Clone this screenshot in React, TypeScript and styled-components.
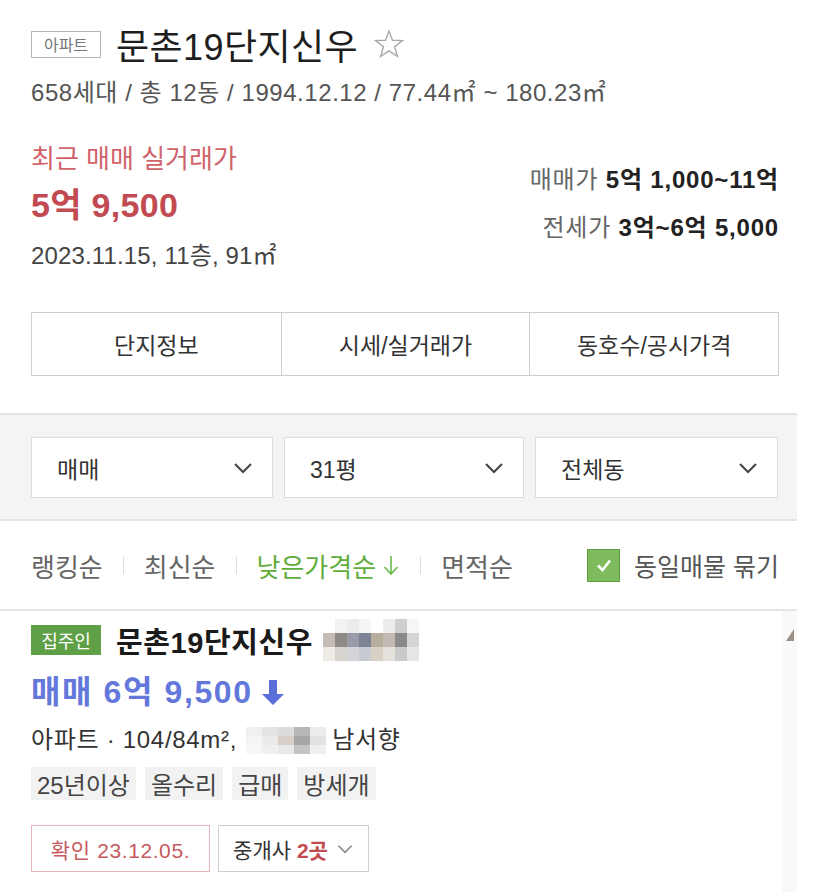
import styled, { createGlobalStyle } from 'styled-components'

const GlobalStyle = createGlobalStyle`
  html, body {
    margin: 0;
    padding: 0;
    background: #ffffff;
  }
  body {
    font-family: "Liberation Sans", "Noto Sans CJK KR", sans-serif;
    color: #333;
  }
`;

const Page = styled.div`
  width: 797px;
  background: #fff;
`;

const Summary = styled.section`
  padding: 22px 18px 37px 31px;
`;

const TitleRow = styled.div`
  display: flex;
  align-items: center;
  height: 44px;
`;

const TypeBadge = styled.span`
  display: inline-flex;
  align-items: center;
  justify-content: center;
  box-sizing: border-box;
  width: 70px;
  height: 27px;
  border: 1px solid #b5b5b5;
  font-size: 16px;
  color: #777;
  margin-right: 15px;
`;

const Title = styled.h1`
  margin: 0;
  font-size: 36px;
  font-weight: 400;
  color: #1e1e1e;
  letter-spacing: 0.4px;
`;

const Star = styled.svg`
  margin-left: 15px;
  width: 32px;
  height: 32px;
`;

const Meta = styled.div`
  margin-top: 12px;
  font-size: 24px;
  line-height: 30px;
  color: #555;
  letter-spacing: 0.55px;
`;

const PriceArea = styled.div`
  display: flex;
  justify-content: space-between;
  margin-top: 35px;
`;

const RecentLabel = styled.div`
  font-size: 26px;
  line-height: 32px;
  color: #d0636a;
`;

const RecentPrice = styled.div`
  margin-top: 10px;
  font-size: 34px;
  line-height: 40px;
  font-weight: 700;
  color: #c24b52;
  letter-spacing: 0.3px;
`;

const RecentInfo = styled.div`
  margin-top: 16px;
  font-size: 24px;
  line-height: 30px;
  color: #444;
  letter-spacing: 0.15px;
`;

const RangeList = styled.div`
  display: flex;
  flex-direction: column;
  align-items: flex-end;
  padding-top: 22px;
  gap: 18px;
`;

const RangeLine = styled.div`
  font-size: 24px;
  line-height: 30px;
  color: #666;
  letter-spacing: 0.8px;
  b {
    color: #222;
    font-weight: 700;
    letter-spacing: 0.8px;
  }
`;

const Tabs = styled.div`
  display: grid;
  grid-template-columns: 1fr 1fr 1fr;
  margin-top: 41px;
  border: 1px solid #cfcfcf;
  height: 62px;
`;

const Tab = styled.div`
  display: flex;
  align-items: center;
  justify-content: center;
  font-size: 23px;
  color: #333;
  & + & {
    border-left: 1px solid #cfcfcf;
  }
`;

const FilterBand = styled.div`
  background: #f4f4f4;
  border-top: 2px solid #e3e3e3;
  border-bottom: 2px solid #e3e3e3;
  padding: 22px 18px 21px 31px;
  display: grid;
  grid-template-columns: 242px 240px 243px;
  gap: 11px;
`;

const Select = styled.div`
  box-sizing: border-box;
  height: 61px;
  background: #fff;
  border: 1px solid #dcdcdc;
  display: flex;
  align-items: center;
  justify-content: space-between;
  padding: 0 18px 0 25px;
  font-size: 23px;
  color: #333;
`;

const SortBar = styled.div`
  display: flex;
  align-items: center;
  height: 88px;
  padding: 0 18px 0 31px;
  border-bottom: 2px solid #e6e6e6;
`;

const SortItem = styled.span<{ $active?: boolean }>`
  display: inline-flex;
  align-items: center;
  font-size: 26px;
  color: ${p => (p.$active ? '#5fae3c' : '#666')};
  svg {
    margin-left: 6px;
  }
`;

const SortDivider = styled.span`
  width: 1px;
  height: 18px;
  background: #dedede;
  margin: 0 20px;
`;

const Grouping = styled.label`
  margin-left: auto;
  display: flex;
  align-items: center;
  gap: 14px;
  font-size: 25px;
  color: #555;
`;

const CheckBox = styled.span`
  box-sizing: border-box;
  width: 33px;
  height: 33px;
  background: #7dbb5d;
  border: 1px solid #5e9d42;
  display: flex;
  align-items: center;
  justify-content: center;
`;

const ListArea = styled.div`
  display: flex;
`;

const Article = styled.article`
  flex: 1;
  padding: 12px 0 20px 31px;
`;

const ArticleHead = styled.div`
  display: flex;
  align-items: center;
  height: 34px;
`;

const OwnerBadge = styled.span`
  display: inline-flex;
  align-items: center;
  justify-content: center;
  width: 70px;
  height: 30px;
  background: #5fa046;
  color: #fff;
  font-size: 18px;
  margin-right: 15px;
`;

const ArticleTitle = styled.span`
  font-size: 29px;
  font-weight: 700;
  color: #1a1a1a;
  letter-spacing: 0.6px;
  margin-right: 10px;
`;

const ArticlePrice = styled.div`
  display: flex;
  align-items: center;
  margin-top: 15px;
  font-size: 32px;
  line-height: 40px;
  font-weight: 700;
  color: #6478dc;
  letter-spacing: 1.6px;
  svg {
    margin-left: 8px;
  }
`;

const ArticleInfo = styled.div`
  display: flex;
  align-items: center;
  margin-top: 13px;
  font-size: 24px;
  line-height: 30px;
  color: #333;
  letter-spacing: 0.7px;
  svg {
    margin: 0 6px 0 9px;
  }
`;

const TagList = styled.div`
  display: flex;
  gap: 9px;
  margin-top: 12px;
`;

const Tag = styled.span`
  background: #f2f2f2;
  height: 33px;
  display: inline-flex;
  align-items: center;
  padding: 0 6px;
  font-size: 24px;
  color: #444;
`;

const ActionRow = styled.div`
  display: flex;
  gap: 8px;
  margin-top: 25px;
`;

const Confirmed = styled.span`
  box-sizing: border-box;
  height: 47px;
  width: 179px;
  border: 1px solid #eab5b8;
  display: inline-flex;
  align-items: center;
  justify-content: center;
  font-size: 21px;
  color: #c65a60;
  letter-spacing: 0.6px;
`;

const Agents = styled.span`
  box-sizing: border-box;
  height: 47px;
  width: 151px;
  border: 1px solid #cfcfcf;
  display: inline-flex;
  align-items: center;
  justify-content: center;
  gap: 8px;
  font-size: 21px;
  color: #333;
  b {
    color: #c24b52;
    font-weight: 700;
  }
`;

const Scrollbar = styled.div`
  width: 15px;
  background: #f9f9f9;
  display: flex;
  justify-content: center;
  padding-top: 16px;
`;

const Chevron = ({ size = 22, color = '#444' }: { size?: number; color?: string }) => (
  <svg width={size} height={size} viewBox="0 0 22 22">
    <polyline points="3,7 11,15 19,7" fill="none" stroke={color} strokeWidth="2" />
  </svg>
);

const Mosaic = ({ cells, w, h }: { cells: string[][]; w: number; h: number }) => (
  <svg width={cells[0].length * w} height={cells.length * h}>
    {cells.map((row, r) =>
      row.map((c, i) => <rect key={`${r}-${i}`} x={i * w} y={r * h} width={w} height={h} fill={c} />)
    )}
  </svg>
);

const titleBlur = [
  ['#ffffff', '#f2f2f2', '#ececec', '#f4f4f4', '#ffffff', '#ececec', '#cfcfcf', '#f6f6f6'],
  ['#c5bdb5', '#8e8a86', '#9a9aa8', '#7d8294', '#b8ae9e', '#c1bab4', '#8a8a8a', '#d4d4d4'],
  ['#eeeae6', '#d8d4d0', '#d4d4d8', '#c9cbd3', '#d8d0c4', '#e4e0dc', '#cacaca', '#e6e6e6'],
];

const infoBlur = [
  ['#f0f0f0', '#e4e4e4', '#dcdcdc', '#b8b8b8', '#ececec'],
  ['#f4f4f4', '#ebebeb', '#d8d0c8', '#a6a6a6', '#e2e2e2'],
  ['#f7f7f7', '#f0f0f0', '#e8e8e8', '#c4c4c4', '#efefef'],
];

export default function App() {
  return (
    <Page>
      <GlobalStyle />
      <Summary>
        <TitleRow>
          <TypeBadge>아파트</TypeBadge>
          <Title>문촌19단지신우</Title>
          <Star viewBox="0 0 32 32">
            <polygon
              points="16,3 19.5,12.3 29.4,12.6 21.6,18.8 24.4,28.4 16,22.8 7.6,28.4 10.4,18.8 2.6,12.6 12.5,12.3"
              fill="none"
              stroke="#a9a9a9"
              strokeWidth="1.4"
            />
          </Star>
        </TitleRow>
        <Meta>658세대 / 총 12동 / 1994.12.12 / 77.44㎡ ~ 180.23㎡</Meta>
        <PriceArea>
          <div>
            <RecentLabel>최근 매매 실거래가</RecentLabel>
            <RecentPrice>5억 9,500</RecentPrice>
            <RecentInfo>2023.11.15, 11층, 91㎡</RecentInfo>
          </div>
          <RangeList>
            <RangeLine>
              매매가 <b>5억 1,000~11억</b>
            </RangeLine>
            <RangeLine>
              전세가 <b>3억~6억 5,000</b>
            </RangeLine>
          </RangeList>
        </PriceArea>
        <Tabs>
          <Tab>단지정보</Tab>
          <Tab>시세/실거래가</Tab>
          <Tab>동호수/공시가격</Tab>
        </Tabs>
      </Summary>

      <FilterBand>
        <Select>
          매매 <Chevron />
        </Select>
        <Select>
          31평 <Chevron />
        </Select>
        <Select>
          전체동 <Chevron />
        </Select>
      </FilterBand>

      <SortBar>
        <SortItem>랭킹순</SortItem>
        <SortDivider />
        <SortItem>최신순</SortItem>
        <SortDivider />
        <SortItem $active>
          낮은가격순
          <svg width="18" height="24" viewBox="0 0 18 24">
            <path d="M9 3v18M2.5 14l6.5 7 6.5-7" fill="none" stroke="#6db84a" strokeWidth="1.6" />
          </svg>
        </SortItem>
        <SortDivider />
        <SortItem>면적순</SortItem>
        <Grouping>
          <CheckBox>
            <svg width="18" height="18" viewBox="0 0 18 18">
              <polyline points="3,9.5 7.5,14 15,4.5" fill="none" stroke="#fff" strokeWidth="2.6" />
            </svg>
          </CheckBox>
          동일매물 묶기
        </Grouping>
      </SortBar>

      <ListArea>
        <Article>
          <ArticleHead>
            <OwnerBadge>집주인</OwnerBadge>
            <ArticleTitle>문촌19단지신우</ArticleTitle>
            <Mosaic cells={titleBlur} w={12} h={14} />
          </ArticleHead>
          <ArticlePrice>
            매매 6억 9,500
            <svg width="24" height="27" viewBox="0 0 24 27">
              <path d="M8 1h8v14h7L12 26 1 15h7z" fill="#5a70d8" />
            </svg>
          </ArticlePrice>
          <ArticleInfo>
            아파트 · 104/84m², <Mosaic cells={infoBlur} w={16} h={9} /> 남서향
          </ArticleInfo>
          <TagList>
            <Tag>25년이상</Tag>
            <Tag>올수리</Tag>
            <Tag>급매</Tag>
            <Tag>방세개</Tag>
          </TagList>
          <ActionRow>
            <Confirmed>확인 23.12.05.</Confirmed>
            <Agents>
              <span>
                중개사 <b>2곳</b>
              </span>
              <Chevron size={18} color="#888" />
            </Agents>
          </ActionRow>
        </Article>
        <Scrollbar>
          <svg width="10" height="14" viewBox="0 0 10 14">
            <polygon points="9,2 9,14 1,14" fill="#9a8f86" />
          </svg>
        </Scrollbar>
      </ListArea>
    </Page>
  );
}
